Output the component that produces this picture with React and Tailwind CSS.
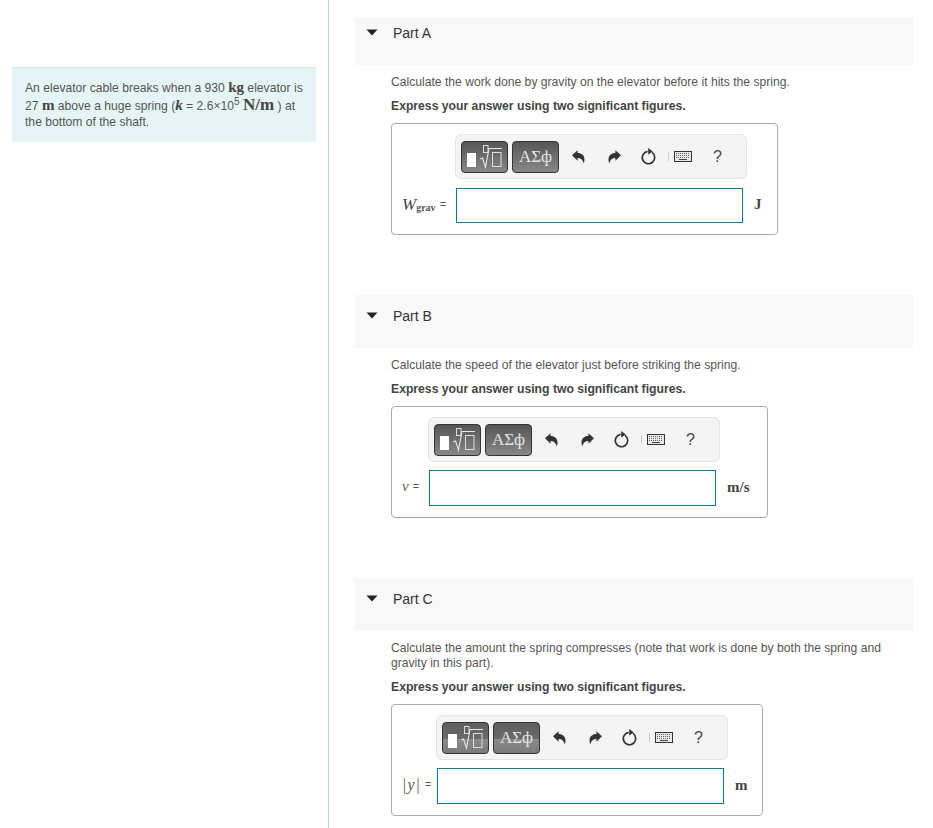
const sans = 'font-["Liberation_Sans",Arial,sans-serif]'
const serif = 'font-["Liberation_Serif","Times_New_Roman",serif]'

function TemplateIcon() {
  return (
    <svg width="38" height="26" viewBox="0 0 38 26" fill="none">
      <rect x="1" y="9" width="9" height="14" fill="#fff" />
      <rect x="17.5" y="1.5" width="4.5" height="7" stroke="#ddd" strokeWidth="1" />
      <path d="M14 15 L16.5 14 L19.5 23 L23 4.5 L36 4.5" stroke="#e6e6e6" strokeWidth="1.1" />
      <rect x="26.5" y="8.5" width="8.5" height="14" stroke="#ddd" strokeWidth="1" />
    </svg>
  )
}

function UndoIcon({ flip }) {
  return (
    <svg className={flip ? '-scale-x-100' : ''} width="13" height="14" viewBox="0 0 13 14">
      <path d="M0 5.2 L5.6 0.2 V3 C10.5 3 14 6.5 11.8 13.6 C11 10 9 8 5.6 8 V10.8 Z" fill="#333" />
    </svg>
  )
}

function KeyboardIcon() {
  return (
    <svg width="18" height="11" viewBox="0 0 18 11" fill="none">
      <rect x="0.5" y="0.5" width="17" height="10" fill="#e8e8e8" stroke="#333" />
      <path d="M2 2.5h14M2 4.5h14M2 6.5h14" stroke="#666" strokeDasharray="1 1" />
      <path d="M5 8.5h8" stroke="#444" />
    </svg>
  )
}

function ResetIcon() {
  return (
    <svg width="16" height="18" viewBox="0 0 16 18" fill="none">
      <path d="M6.6 3.4 A6.2 6.2 0 1 0 11 4.4" stroke="#333" strokeWidth="1.7" />
      <path d="M7.2 0 L11.8 3.4 L7.2 6.4 Z" fill="#333" />
    </svg>
  )
}

function Toolbar({ split }) {
  const button = split
    ? 'bg-[linear-gradient(#5f5f5f_0,#6a6a6a_52%,#8c8c8c_52%,#7a7a7a_100%)]'
    : 'bg-linear-to-b from-[#565656] to-[#888888]'
  return (
    <div className="flex items-center w-[292px] h-[45px] pl-[5px] rounded-[6px] border border-[#e3e3e3] bg-[#f4f4f4]">
      <div className={`flex items-center justify-center w-[47px] h-[32px] rounded-[4px] border border-[#333] ${button}`}>
        <TemplateIcon />
      </div>
      <div className={`flex items-center justify-center w-[47px] h-[32px] ml-[4px] rounded-[4px] border border-[#333] text-[17px] leading-[24px] text-[#e4e4e4] ${serif} ${button}`}>
        ΑΣф
      </div>
      <div className="ml-[13px] flex"><UndoIcon /></div>
      <div className="ml-[23px] flex"><UndoIcon flip /></div>
      <div className="ml-[20px] flex"><ResetIcon /></div>
      <div className="ml-[11px] w-px h-[9px] bg-[#ccc]" />
      <div className="ml-[5px] flex"><KeyboardIcon /></div>
      <span className={`ml-[21px] text-[16px] leading-none text-[#444] ${sans}`}>?</span>
    </div>
  )
}

function AnswerBox({ width, toolbarLeft, labelWidth, label, unit, unitClass, inputHeight, rowGap, split }) {
  return (
    <div className={`flex flex-col rounded-[4px] border border-[#aaa] pt-[10px] pb-[11px] ${width}`}>
      <div className={toolbarLeft}>
        <Toolbar split={split} />
      </div>
      <div className={`flex items-center pl-[10px] ${rowGap}`}>
        <div className={`flex items-center -mt-[3px] text-[#555] ${labelWidth}`}>{label}</div>
        <div className={`w-[287px] border border-[#007c9c] bg-white ${inputHeight}`} />
        <span className={`ml-[11px] font-bold text-[15px] text-[#444] ${unitClass} ${serif}`}>{unit}</span>
      </div>
    </div>
  )
}

function Part({ name, headerClass, children }) {
  return (
    <section className="mb-[60px]">
      <div className={`flex items-start w-[559px] bg-[#f8f8f8] ${headerClass}`}>
        <svg className="ml-[12px] mt-[3px]" width="12" height="7" viewBox="0 0 12 7">
          <path d="M0.5 0.5 H11.5 L6 6.5 Z" fill="#222" />
        </svg>
        <span className="ml-[15px] text-[14px] leading-[15px] text-[#333]">{name}</span>
      </div>
      <div className="ml-[37px] pt-[10px]">{children}</div>
    </section>
  )
}

function Hint() {
  return <p className="mt-[9px] mb-[9px] text-[12.2px] leading-[15px] font-bold text-[#444]">Express your answer using two significant figures.</p>
}

const bigUnit = `${serif} font-bold text-[15px] leading-none text-[#444]`

export default function App() {
  return (
    <div className={`flex w-[933px] h-[828px] overflow-hidden bg-white ${sans}`}>
      <aside className="w-[329px] shrink-0 border-r border-[#bcd0e2] pt-[67px] px-[12px]">
        <div className="w-[304px] h-[75px] border-t border-[#d5e6e6] bg-[#e5f5f6] px-[13px] pt-[12px] text-[12.15px] leading-[16px] text-[#555]">
          An elevator cable breaks when a 930 <span className={bigUnit}>kg</span> elevator is
          27 <span className={bigUnit}>m</span> above a huge spring (<span className={`${bigUnit} italic`}>k</span> = 2.6×10<sup className="text-[10px] leading-none">5</sup> <span className={`${serif} font-bold text-[17px] leading-none text-[#444]`}>N/m</span> ) at
          the bottom of the shaft.
        </div>
      </aside>
      <main className="pl-[25px] pt-[17px] min-w-0 text-[#555] text-[12.15px] leading-[15px]">
        <Part name="Part A" headerClass="h-[48px] pt-[9px]">
          <p>Calculate the work done by gravity on the elevator before it hits the spring.</p>
          <Hint />
          <AnswerBox
            width="w-[387px]"
            toolbarLeft="ml-[63px]"
            labelWidth="w-[54px]"
            inputHeight="h-[35px]"
            rowGap="mt-[9px]"
            unit="J"
            unitClass="-mt-[3px]"
            label={<><span className={`${serif} italic text-[17px] text-[#444]`}>W</span><span className={`${serif} font-bold text-[10px] mt-[6px] text-[#555]`}>grav</span><span className="ml-[4px] text-[11px]">=</span></>}
          />
        </Part>
        <Part name="Part B" headerClass="h-[53px] pt-[14px]">
          <p>Calculate the speed of the elevator just before striking the spring.</p>
          <Hint />
          <AnswerBox
            width="w-[377px]"
            toolbarLeft="ml-[36px]"
            labelWidth="w-[27px]"
            inputHeight="h-[36px]"
            rowGap="mt-[8px]"
            unit="m/s"
            unitClass="-mt-[1px]"
            label={<><span className={`${serif} italic text-[15px]`}>v</span><span className="ml-[4px] text-[11px]">=</span></>}
          />
        </Part>
        <Part name="Part C" headerClass="h-[53px] pt-[14px]">
          <p className="w-[510px]">Calculate the amount the spring compresses (note that work is done by both the spring and gravity in this part).</p>
          <Hint />
          <AnswerBox
            split
            width="w-[372px]"
            toolbarLeft="ml-[44px]"
            labelWidth="w-[35px]"
            inputHeight="h-[36px]"
            rowGap="mt-[8px]"
            unit="m"
            unitClass="-mt-[1px]"
            label={<><span className={`${serif} italic text-[16px] tracking-[1px]`}>|y|</span><span className="ml-[4px] text-[11px]">=</span></>}
          />
        </Part>
      </main>
    </div>
  )
}
